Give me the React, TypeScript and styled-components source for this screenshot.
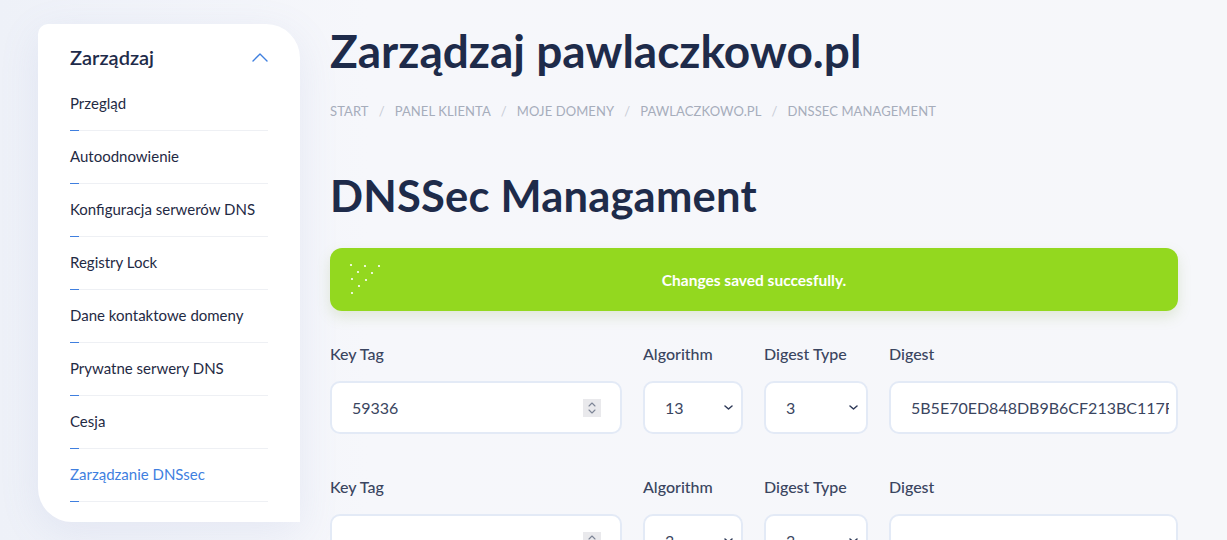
import React from "react";
import styled, { createGlobalStyle } from "styled-components";

const GlobalStyle = createGlobalStyle`
  html, body {
    margin: 0;
    padding: 0;
    background: #f5f7fa;
    font-family: Lato, "Open Sans", "Liberation Sans", sans-serif;
    color: #1e2b4a;
    overflow: hidden;
  }
  * { box-sizing: border-box; }
`;

const Page = styled.div`
  display: flex;
  align-items: flex-start;
  gap: 30px;
  padding: 24px 0 0 38px;
  height: 540px;
  background: linear-gradient(90deg, #eef1f8 0%, #f6f7fb 30%, #f6f7fa 100%);
`;

const Sidebar = styled.aside`
  width: 262px;
  flex-shrink: 0;
  background: #fff;
  border-radius: 10px 34px 0 34px;
  padding: 19px 32px 20px 32px;
  box-shadow: 0 10px 40px rgba(120, 140, 200, 0.12);
`;

const SideHead = styled.div`
  display: flex;
  justify-content: space-between;
  align-items: center;
  font-size: 20px;
  line-height: 28px;
  font-weight: 600;
  color: #1e2b4a;
  margin-bottom: 7px;
`;

const MenuItem = styled.div<{ $active?: boolean }>`
  padding-top: 15px;
  font-size: 15px;
  line-height: 20px;
  color: ${({ $active }) => ($active ? "#3f7fdf" : "#1f2a44")};
`;

const ItemLine = styled.div`
  position: relative;
  margin-top: 17px;
  height: 1px;
  background: #eef0f4;
  &::before {
    content: "";
    position: absolute;
    left: 0;
    top: 0;
    width: 9px;
    height: 1px;
    background: #3f7fdf;
  }
`;

const Main = styled.main`
  width: 848px;
  display: flex;
  flex-direction: column;
`;

const Title = styled.h1`
  margin: 0;
  font-size: 46px;
  line-height: 54px;
  font-weight: 700;
  color: #1e2b4a;
`;

const Crumbs = styled.nav`
  display: flex;
  gap: 10px;
  margin-top: 24px;
  font-size: 13px;
  line-height: 18px;
  letter-spacing: 0.1px;
  color: #a6adbb;
  text-transform: uppercase;
`;

const Sep = styled.span`
  color: #c6cbd5;
`;

const Heading = styled.h2`
  margin: 49px 0 0;
  font-size: 43.5px;
  line-height: 52px;
  font-weight: 700;
  color: #1e2b4a;
  letter-spacing: 0.2px;
`;

const Alert = styled.div`
  position: relative;
  margin-top: 27px;
  height: 63px;
  border-radius: 12px;
  background: #93d81f;
  box-shadow: 0 6px 14px rgba(120, 160, 60, 0.18);
  display: flex;
  align-items: center;
  justify-content: center;
  color: #fff;
  font-weight: 700;
  font-size: 15.5px;
`;

const Dots = styled.svg`
  position: absolute;
  left: 18px;
  top: 14px;
`;

const FormRow = styled.div<{ $top: number }>`
  display: grid;
  grid-template-columns: 292px 100px 104px 289px;
  column-gap: 21px;
  margin-top: ${({ $top }) => $top}px;
`;

const Field = styled.div`
  display: flex;
  flex-direction: column;
  gap: 17px;
`;

const Label = styled.label`
  font-size: 16px;
  line-height: 20px;
  font-weight: 500;
  color: #3a4560;
`;

const Box = styled.div`
  height: 53px;
  background: #fff;
  border: 2px solid #e3eaf6;
  border-radius: 10px;
  display: flex;
  align-items: center;
  padding: 0 7px 0 20px;
  font-size: 16px;
  color: #3a4560;
  overflow: hidden;
`;

const TextInput = styled.input`
  flex: 1;
  min-width: 0;
  border: none;
  outline: none;
  background: transparent;
  font: inherit;
  color: inherit;
  padding: 0;
`;

const Spin = styled.div`
  width: 18px;
  height: 18px;
  margin-right: 12px;
  background: #e9e9ec;
  display: flex;
  align-items: center;
  justify-content: center;
`;

const SelectValue = styled.span`
  flex: 1;
`;

function Chevron({ up }: { up?: boolean }) {
  return (
    <svg width="16" height="10" viewBox="0 0 16 10" fill="none">
      <path
        d={up ? "M1 9L8 2l7 7" : "M1 1l7 7 7-7"}
        stroke="#3f7fdf"
        strokeWidth="1.4"
        strokeLinecap="round"
        strokeLinejoin="round"
      />
    </svg>
  );
}

function SmallChevron() {
  return (
    <svg width="9" height="5" viewBox="0 0 9 5" fill="none" style={{ marginRight: 1 }}>
      <path d="M1 1l3.5 3 3.5-3" stroke="#2f3a58" strokeWidth="1.5" strokeLinecap="round" strokeLinejoin="round" />
    </svg>
  );
}

function SpinIcon() {
  return (
    <svg width="10" height="14" viewBox="0 0 10 14" fill="none">
      <path d="M2 5l3-3 3 3M2 9l3 3 3-3" stroke="#7d8596" strokeWidth="1.1" strokeLinecap="round" strokeLinejoin="round" />
    </svg>
  );
}

const dotPts: [number, number][] = [
  [3, 3], [17, 4], [31, 4], [10, 10], [24, 11], [4, 17], [18, 18], [11, 24], [4, 31],
];

const menu = [
  "Przegląd",
  "Autoodnowienie",
  "Konfiguracja serwerów DNS",
  "Registry Lock",
  "Dane kontaktowe domeny",
  "Prywatne serwery DNS",
  "Cesja",
  "Zarządzanie DNSsec",
];

const crumbs = ["Start", "Panel klienta", "Moje domeny", "pawlaczkowo.pl", "DNSSec management"];

function Record({ top, keyTag, alg, type, digest }: { top: number; keyTag: string; alg: string; type: string; digest: string }) {
  return (
    <FormRow $top={top}>
      <Field>
        <Label>Key Tag</Label>
        <Box>
          <TextInput defaultValue={keyTag} />
          <Spin>
            <SpinIcon />
          </Spin>
        </Box>
      </Field>
      <Field>
        <Label>Algorithm</Label>
        <Box>
          <SelectValue>{alg}</SelectValue>
          <SmallChevron />
        </Box>
      </Field>
      <Field>
        <Label>Digest Type</Label>
        <Box>
          <SelectValue>{type}</SelectValue>
          <SmallChevron />
        </Box>
      </Field>
      <Field>
        <Label>Digest</Label>
        <Box>
          <TextInput defaultValue={digest} />
        </Box>
      </Field>
    </FormRow>
  );
}

export default function App() {
  return (
    <>
      <GlobalStyle />
      <Page>
        <Sidebar>
          <SideHead>
            Zarządzaj
            <Chevron up />
          </SideHead>
          {menu.map((m, i) => (
            <MenuItem key={m} $active={i === menu.length - 1}>
              {m}
              <ItemLine />
            </MenuItem>
          ))}
        </Sidebar>
        <Main>
          <Title>Zarządzaj pawlaczkowo.pl</Title>
          <Crumbs>
            {crumbs.map((c, i) => (
              <React.Fragment key={c}>
                {i > 0 && <Sep>/</Sep>}
                <span>{c}</span>
              </React.Fragment>
            ))}
          </Crumbs>
          <Heading>DNSSec Managament</Heading>
          <Alert>
            <Dots width="36" height="36" viewBox="0 0 36 36">
              {dotPts.map(([x, y], i) => (
                <circle key={i} cx={x} cy={y} r="1.1" fill="#fff" />
              ))}
            </Dots>
            Changes saved succesfully.
          </Alert>
          <Record top={33} keyTag="59336" alg="13" type="3" digest="5B5E70ED848DB9B6CF213BC117FE5A7C2D1" />
          <Record top={43} keyTag="" alg="3" type="3" digest="" />
        </Main>
      </Page>
    </>
  );
}
